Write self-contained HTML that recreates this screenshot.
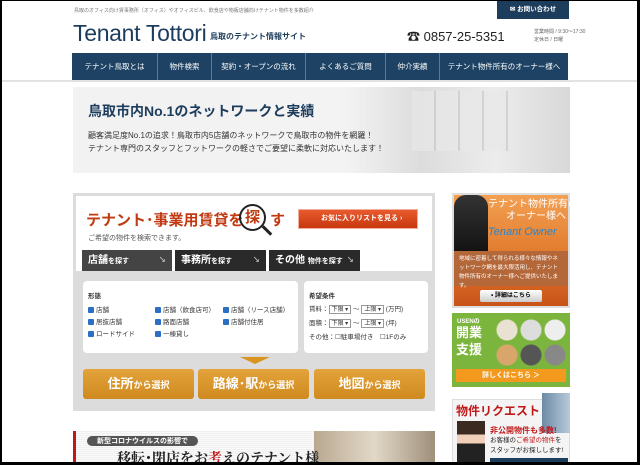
<!DOCTYPE html>
<html><head><meta charset="utf-8">
<style>
*{margin:0;padding:0;box-sizing:border-box}
body{width:640px;height:465px;overflow:hidden;background:#000;position:relative;font-family:"Liberation Sans","Noto Sans CJK JP",sans-serif}
#pg{position:absolute;left:2px;top:1px;width:635px;height:461px;background:#fff;overflow:hidden}
.a{position:absolute}
.t{white-space:nowrap}
.nav{position:absolute;top:52px;left:70px;width:496px;height:27px;background:#1d4264;display:flex}
.nav div{color:#fff;font-size:7.5px;line-height:27px;text-align:center;border-right:1px solid #5d7a95}
.nav div:last-child{border:none}
.tab{position:absolute;top:249px;height:21px;background:#2a2a2a;color:#fff;font-size:10px;font-weight:bold;line-height:21px;padding-left:6px}
.tab small{font-size:7px}
.tab i{position:absolute;right:6px;font-style:normal;font-size:7px;color:#ccc}
.cb{font-size:6.5px;color:#333;position:absolute;white-space:nowrap}
.cb b{display:inline-block;width:6px;height:6px;background:#2b6fc4;border-radius:1px;margin-right:2px;vertical-align:-1px}
.btn{position:absolute;top:368px;width:111px;height:30px;border-radius:3px;background:linear-gradient(#e3a33a,#cf8a1f);color:#fff;font-weight:bold;font-size:13px;text-align:center;line-height:30px}
.btn small{font-size:9px}
.sel{display:inline-block;border:1px solid #999;font-size:6px;padding:0 2px;background:#fff;height:9px;line-height:8px}
</style></head><body>
<div id="pg">
<div class="a t" style="left:72px;top:6px;font-size:5px;color:#777">鳥取のオフィス向け賃事務所（オフィス）やオフィスビル、飲食店や物販店舗向けテナント物件を多数紹介</div>
<div class="a" style="left:495px;top:-1px;width:72px;height:19px;background:#1d3d5c;color:#fff;font-size:6.5px;font-weight:bold;text-align:center;line-height:19px">✉ お問い合わせ</div>
<div class="a t" style="left:71px;top:19px;font-size:23px;color:#1d3d5c;letter-spacing:-0.3px">Tenant Tottori</div>
<div class="a t" style="left:208px;top:30px;font-size:8px;color:#1d3d5c;font-weight:bold">鳥取のテナント情報サイト</div>
<div class="a t" style="left:405px;top:25px;font-size:13px;color:#222">☎ 0857-25-5351</div>
<div class="a t" style="left:532px;top:27px;font-size:5px;color:#666;line-height:8px">営業時間 / 9:30〜17:30<br>定休日 / 日曜</div>
<div class="nav"><div style="width:86px">テナント鳥取とは</div><div style="width:54px">物件検索</div><div style="width:94px">契約・オープンの流れ</div><div style="width:80px">よくあるご質問</div><div style="width:54px">仲介実績</div><div style="width:128px">テナント物件所有のオーナー様へ</div></div>
<div class="a" style="left:0;top:79px;width:635px;height:2px;background:#e2e2e2"></div>
<div class="a" style="left:71px;top:86px;width:497px;height:86px;background:linear-gradient(90deg,#f2f2f2 0%,#f3f3f3 55%,#dcdcdc 70%,#ececec 85%,#d8d8d8 100%)"></div>
<div class="a" style="left:410px;top:90px;width:100px;height:60px;background:repeating-linear-gradient(90deg,#e8e8e8 0 22px,#c9c9c9 22px 24px);opacity:.7"></div>
<div class="a t" style="left:86px;top:100px;font-size:14px;font-weight:bold;color:#1d3d5c">鳥取市内No.1のネットワークと実績</div>
<div class="a t" style="left:86px;top:128px;font-size:8px;color:#333;line-height:13px">顧客満足度No.1の追求！鳥取市内5店舗のネットワークで鳥取市の物件を網羅！<br>テナント専門のスタッフとフットワークの軽さでご要望に柔軟に対応いたします！</div>
<!-- search -->
<div class="a" style="left:71px;top:192px;width:362px;height:218px;background:#dcdcdc"></div>
<div class="a" style="left:74px;top:195px;width:356px;height:75px;background:#fff"></div>
<div class="a t" style="left:84px;top:208px;font-size:15px;font-weight:bold;color:#c03a12">テナント･事業用賃貸を</div>
<div class="a" style="left:237px;top:203px;width:27px;height:27px;border:2px solid #222;border-radius:50%;font-size:15px;font-weight:bold;color:#c03a12;text-align:center;line-height:23px">探</div>
<div class="a" style="left:259px;top:228px;width:12px;height:3px;background:#222;transform:rotate(45deg)"></div>
<div class="a t" style="left:268px;top:208px;font-size:15px;font-weight:bold;color:#c03a12">す</div>
<div class="a t" style="left:86px;top:232px;font-size:7px;color:#555">ご希望の物件を検索できます。</div>
<div class="a" style="left:296px;top:208px;width:120px;height:20px;background:linear-gradient(#e85a2e,#c8380f);border:1px solid #f0b0a0;color:#fff;font-size:7px;font-weight:bold;line-height:18px;padding-left:22px">お気に入りリストを見る ›</div>
<div class="tab" style="left:80px;width:90px;background:#444">店舗<small>を探す</small><i>↘</i></div>
<div class="tab" style="left:173px;width:91px">事務所<small>を探す</small><i>↘</i></div>
<div class="tab" style="left:267px;width:91px">その他 <small>物件を探す</small><i>↘</i></div>
<div class="a" style="left:81px;top:280px;width:215px;height:72px;background:#fff;border-radius:4px"></div>
<div class="a" style="left:302px;top:280px;width:124px;height:72px;background:#fff;border-radius:4px"></div>
<div class="cb" style="left:86px;top:289px;font-weight:bold">形態</div>
<div class="cb" style="left:86px;top:303px"><b></b>店舗</div>
<div class="cb" style="left:86px;top:315px"><b></b>居抜店舗</div>
<div class="cb" style="left:86px;top:327px"><b></b>ロードサイド</div>
<div class="cb" style="left:153px;top:303px"><b></b>店舗（飲食店可）</div>
<div class="cb" style="left:153px;top:315px"><b></b>路面店舗</div>
<div class="cb" style="left:153px;top:327px"><b></b>一棟貸し</div>
<div class="cb" style="left:221px;top:303px"><b></b>店舗（リース店舗）</div>
<div class="cb" style="left:221px;top:315px"><b></b>店舗付住居</div>
<div class="cb" style="left:307px;top:289px;font-weight:bold">希望条件</div>
<div class="cb" style="left:307px;top:302px">賃料：<span class="sel">下限 ▾</span> 〜 <span class="sel">上限 ▾</span> (万円)</div>
<div class="cb" style="left:307px;top:316px">面積：<span class="sel">下限 ▾</span> 〜 <span class="sel">上限 ▾</span> (坪)</div>
<div class="cb" style="left:307px;top:330px">その他：☐駐車場付き　☐1Fのみ</div>
<div class="a" style="left:238px;top:356px;width:0;height:0;border-left:15px solid transparent;border-right:15px solid transparent;border-top:7px solid #d9951f"></div>
<div class="btn" style="left:81px">住所<small>から選択</small></div>
<div class="btn" style="left:196px">路線･駅<small>から選択</small></div>
<div class="btn" style="left:312px">地図<small>から選択</small></div>
<div class="a" style="left:71px;top:430px;width:362px;height:35px;background:repeating-linear-gradient(#f0f0f0 0 1px,#fafafa 1px 2px);border-left:3px solid #c01818"></div>
<div class="a" style="left:312px;top:430px;width:121px;height:35px;background:linear-gradient(90deg,#b9a890,#e2d8c8,#9e8f7a)"></div>
<div class="a t" style="left:85px;top:435px;font-size:7px;color:#fff;background:#555;border-radius:6px;padding:0 10px;font-weight:bold">新型コロナウイルスの影響で</div>
<div class="a t" style="left:115px;top:447px;font-size:14px;font-weight:bold;color:#222;font-family:'Liberation Serif','Noto Serif CJK SC',serif">移転･閉店をお<span style="color:#c01818">考</span>えのテナント様</div>
<!-- sidebar -->
<div class="a" style="left:450px;top:192px;width:118px;height:115px;background:#ddd"></div>
<div class="a" style="left:452px;top:194px;width:114px;height:111px;background:linear-gradient(#f3a053,#e07a2c 55%,#c9531a)"></div>
<div class="a" style="left:452px;top:194px;width:34px;height:60px;background:linear-gradient(#333,#111);border-radius:12px 12px 0 0"></div>
<div class="a t" style="left:486px;top:198px;font-size:10px;color:#fff;text-align:right;line-height:12px;width:78px">テナント物件所有の<br>オーナー様へ</div>
<div class="a t" style="left:486px;top:225px;font-size:11px;color:#2a84c8;font-style:italic">Tenant Owner</div>
<div class="a" style="left:452px;top:250px;width:114px;height:35px;background:#b4683a;color:#fff;font-size:5.5px;line-height:9px;padding:4px 5px">地域に密着して得られる様々な情報やネットワーク網を最大限活用し、テナント物件所有のオーナー様へご提供いたします。</div>
<div class="a" style="left:478px;top:289px;width:62px;height:12px;background:linear-gradient(#fff,#ccc);font-size:6px;font-weight:bold;text-align:center;line-height:12px;border-radius:2px">• 詳細はこちら</div>
<div class="a" style="left:450px;top:312px;width:118px;height:74px;background:#7cb53d"></div>
<div class="a t" style="left:455px;top:315px;font-size:6px;color:#fff;font-weight:bold">USENの</div>
<div class="a t" style="left:454px;top:323px;font-size:13px;color:#fff;font-weight:bold;line-height:17px">開業<br>支援</div>
<div class="a" style="left:494px;top:318px;width:70px;height:48px;background:radial-gradient(circle at 11px 11px,#e9e2d2 10px,transparent 11px),radial-gradient(circle at 35px 11px,#ddd 10px,transparent 11px),radial-gradient(circle at 59px 11px,#eee 10px,transparent 11px),radial-gradient(circle at 11px 36px,#d8a66a 10px,transparent 11px),radial-gradient(circle at 35px 36px,#555 10px,transparent 11px),radial-gradient(circle at 59px 36px,#888 10px,transparent 11px)"></div>
<div class="a" style="left:454px;top:368px;width:110px;height:13px;background:#f39a1e;color:#fff;font-size:7px;font-weight:bold;text-align:center;line-height:13px">詳しくはこちら ＞</div>
<div class="a" style="left:450px;top:398px;width:118px;height:67px;background:#f4f4f4;border:1px solid #ddd"></div>
<div class="a" style="left:540px;top:392px;width:28px;height:40px;background:linear-gradient(90deg,#6d8aa5,#b8cadb)"></div>
<div class="a t" style="left:454px;top:401px;font-size:12px;font-weight:bold;color:#c01818">物件リクエスト</div>
<div class="a" style="left:455px;top:420px;width:28px;height:45px;background:linear-gradient(#3a2a20 30%,#f0d0b8 30%,#f0d0b8 50%,#222 50%)"></div>
<div class="a t" style="left:488px;top:424px;font-size:8px;font-weight:bold;color:#c01818">非公開物件も多数!</div>
<div class="a t" style="left:488px;top:435px;font-size:6.5px;color:#222;line-height:10px">お客様の<span style="color:#c01818">ご希望の物件</span>を<br>スタッフがお探しします!</div>
<div class="a" style="left:488px;top:457px;width:78px;height:8px;background:#1d3d5c"></div>
</div>
</body></html>
